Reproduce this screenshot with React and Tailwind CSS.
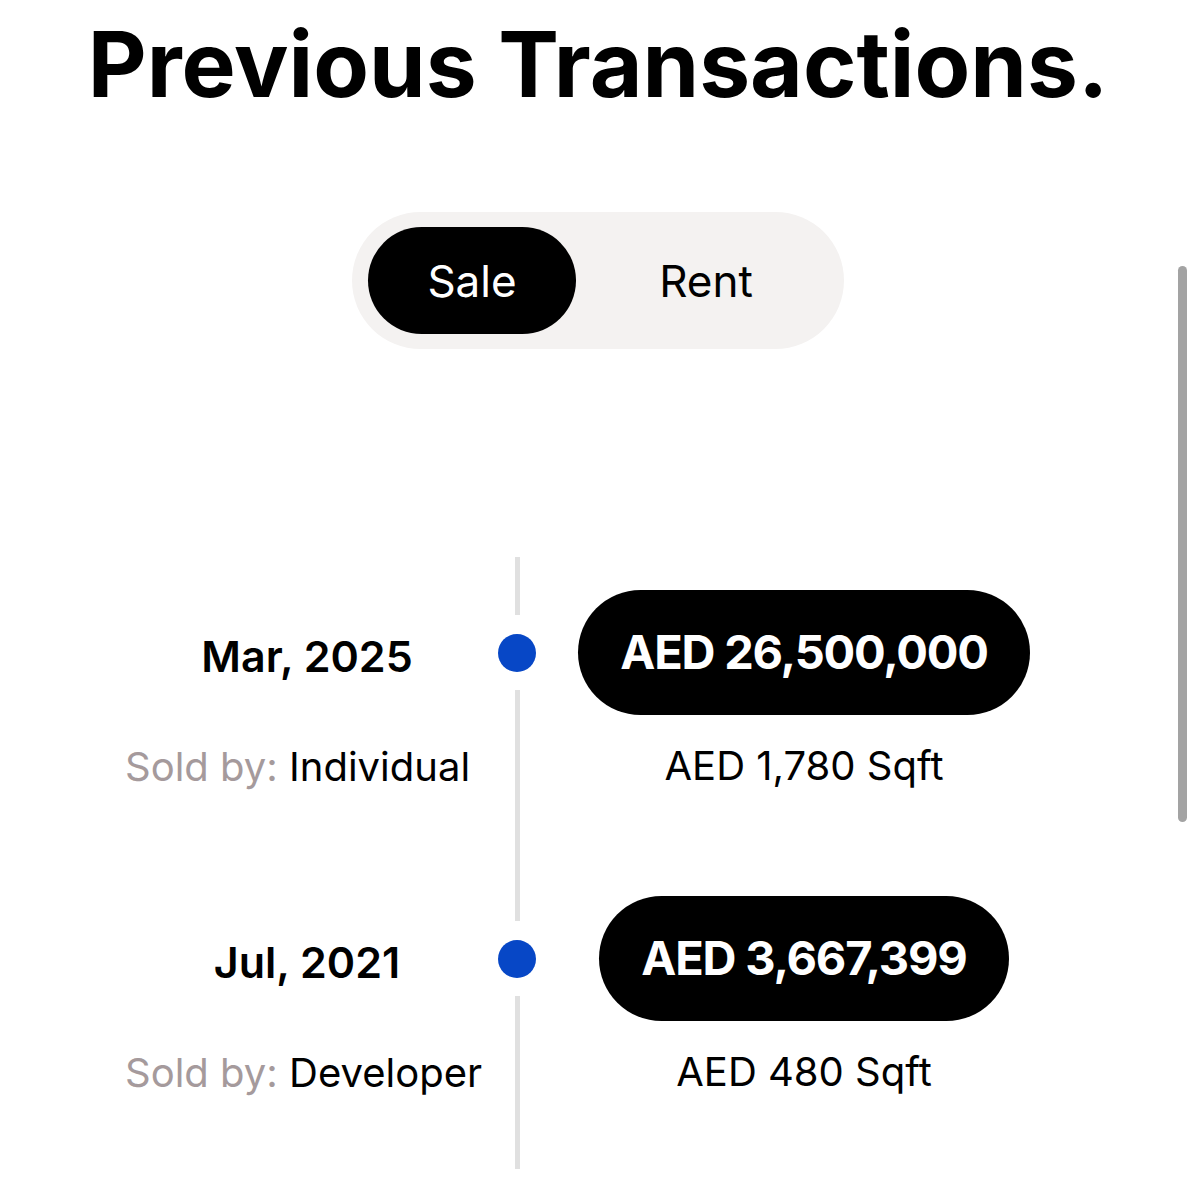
import React from 'react'

const rows = [
  { date: 'Mar, 2025', seller: 'Individual', price: 'AED 26,500,000', sqft: 'AED 1,780 Sqft' },
  { date: 'Jul, 2021', seller: 'Developer', price: 'AED 3,667,399', sqft: 'AED 480 Sqft' },
]

function TimelineRow({ row }) {
  return (
    <div className="grid grid-cols-[386px_38px_536px] h-[306px]">
      <div className="flex flex-col">
        <div className="pt-[73px] pl-[4px] text-center text-[43px] leading-[52px] font-semibold text-black">{row.date}</div>
        <div className="mt-[61px] pl-[13px] text-[40px] leading-[48px] text-black whitespace-nowrap">
          <span className="text-[#a59a9c]">Sold by:</span> {row.seller}
        </div>
      </div>

      <div className="flex flex-col items-center">
        <div className="w-[5px] h-[58px] bg-[#e0e0e0]" />
        <div className="mt-[19px] w-[38px] h-[38px] rounded-full bg-[#0747c6]" />
        <div className="mt-[18px] w-[5px] flex-1 bg-[#e0e0e0]" />
      </div>

      <div className="flex flex-col items-center">
        <div className="mt-[33px] h-[125px] px-[42px] rounded-full bg-black flex items-center text-white text-[47px] font-bold tracking-[-1.2px] whitespace-nowrap">
          {row.price}
        </div>
        <div className="mt-[27px] text-[40px] leading-[48px] text-black">{row.sqft}</div>
      </div>
    </div>
  )
}

export default function App() {
  const [tab, setTab] = React.useState('sale')

  return (
    <div className="relative w-full min-h-[1200px] bg-white overflow-hidden" style={{ fontFamily: 'Inter, "Liberation Sans", sans-serif' }}>
      <h1 className="pt-[19px] text-center text-[91px] leading-none font-bold text-black whitespace-nowrap">
        Previous Transactions.
      </h1>

      <div className="mt-[102px] flex justify-center">
        <div className="w-[492px] h-[137px] rounded-full bg-[#f4f2f1] flex items-center pl-[16px] pr-[8px]">
          <button
            onClick={() => setTab('sale')}
            className={`w-[208px] h-[107px] rounded-full text-[44px] ${tab === 'sale' ? 'bg-black text-white' : 'text-black'}`}
          >
            Sale
          </button>
          <button
            onClick={() => setTab('rent')}
            className={`flex-1 h-[107px] rounded-full text-[44px] ${tab === 'rent' ? 'bg-black text-white' : 'text-black'}`}
          >
            Rent
          </button>
        </div>
      </div>

      <div className="mt-[208px] ml-[112px]">
        {rows.map(r => <TimelineRow key={r.date} row={r} />)}
      </div>

      {/* scrollbar */}
      <div className="absolute right-[9px] top-[266px] w-[9px] h-[556px] rounded-full bg-[#a3a3a3]" />
    </div>
  )
}
